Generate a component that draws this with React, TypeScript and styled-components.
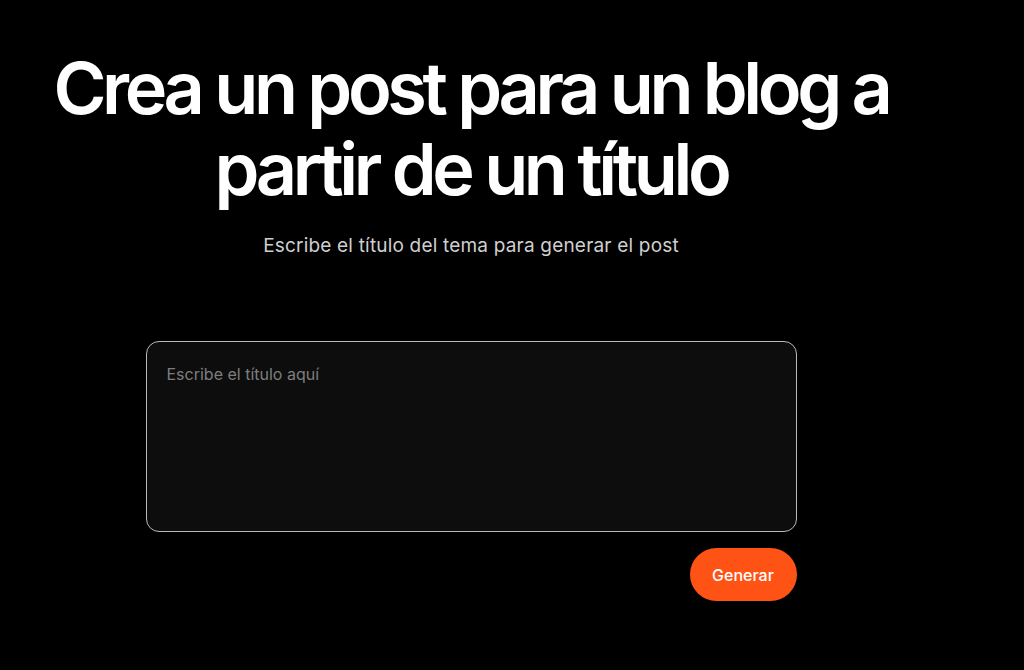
import React from "react";
import styled, { createGlobalStyle } from "styled-components";

const Global = createGlobalStyle`
  html, body { margin: 0; padding: 0; background: #000; }
  body { font-family: Inter, "Noto Sans", sans-serif; color: #fff; }
  * { box-sizing: border-box; }
`;

const Page = styled.main`
  width: 942px;
  min-height: 670px;
  display: flex;
  flex-direction: column;
  align-items: center;
  padding-top: 47px;
`;

const Title = styled.h1`
  margin: 0;
  width: 900px;
  text-align: center;
  font-size: 72px;
  line-height: 81px;
  font-weight: 600;
  letter-spacing: -0.061em;
  color: #fff;
`;

const Subtitle = styled.p`
  margin: 25px 0 0;
  font-size: 19px;
  line-height: 24px;
  color: #cfcfcf;
  letter-spacing: 0.01em;
`;

const Form = styled.form`
  margin-top: 83px;
  width: 651px;
  display: flex;
  flex-direction: column;
  align-items: flex-end;
  gap: 16px;
`;

const Input = styled.textarea`
  width: 100%;
  height: 191px;
  resize: none;
  background: #0d0d0d;
  border: 1px solid #b9b9b9;
  border-radius: 13px;
  padding: 22px 20px;
  font-family: Inter, sans-serif;
  font-size: 16px;
  color: #fff;
  outline: none;
  &::placeholder { color: #7d7d7d; }
`;

const Button = styled.button`
  width: 107px;
  height: 53px;
  border: none;
  border-radius: 27px;
  background: #ff5316;
  color: #fff;
  font-family: Inter, sans-serif;
  font-size: 16px;
  font-weight: 500;
  cursor: pointer;
`;

export default function App() {
  return (
    <>
      <Global />
      <Page>
        <Title>Crea un post para un blog a partir de un título</Title>
        <Subtitle>Escribe el título del tema para generar el post</Subtitle>
        <Form onSubmit={(e) => e.preventDefault()}>
          <Input placeholder="Escribe el título aquí" />
          <Button type="submit">Generar</Button>
        </Form>
      </Page>
    </>
  );
}
